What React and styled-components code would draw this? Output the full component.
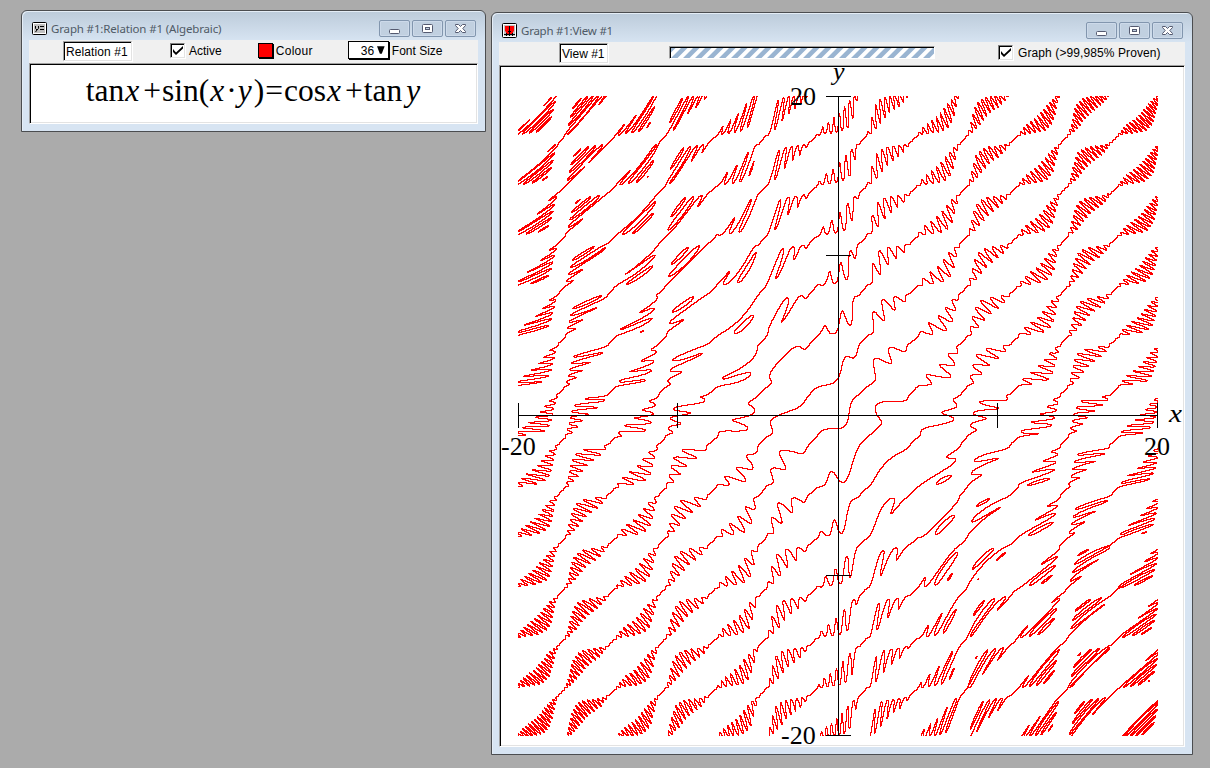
import React, { useMemo } from "react";
import styled, { createGlobalStyle } from "styled-components";

const Global = createGlobalStyle`
  html, body { margin: 0; background: #ababab; overflow: hidden; }
  #root { height: 768px; }
`;

const Desktop = styled.main`
  position: relative;
  width: 1210px;
  height: 768px;
  background: #ababab;
`;

const Window = styled.section`
  position: absolute;
  left: ${(p) => p.$x}px;
  top: ${(p) => p.$y}px;
  width: ${(p) => p.$w}px;
  height: ${(p) => p.$h}px;
  box-sizing: border-box;
  border: 1px solid #4b4d50;
  border-radius: 6px 6px 0 0;
  padding: 0 7px 7px;
  display: flex;
  flex-direction: column;
  background: linear-gradient(#bccbda 0, #d7e4f2 30px);
  box-shadow: inset 1px 1px 0 #e4edf6;
`;

const TitleBar = styled.header`
  display: flex;
  height: 29px;
  flex: none;
  padding: 0 2px 0 3px;
`;

const TitleIcon = styled.svg`
  width: 15px;
  height: ${(p) => p.$h}px;
  margin-top: ${(p) => p.$top}px;
  flex: none;
`;

const Title = styled.h1`
  margin: 10px 0 0 4px;
  flex: 1;
  font: 400 11.5px/16px "Noto Sans", sans-serif;
  letter-spacing: ${(p) => p.$track}px;
  color: #4f5a66;
  white-space: nowrap;
`;

const Captions = styled.div`
  display: flex;
  gap: 2px;
  margin-top: 9px;
`;

const CaptionButton = styled.button`
  width: 31px;
  height: 17px;
  padding: 0;
  border: 1px solid #8296ae;
  border-radius: 2px;
  background: #c1d0e0;
  box-shadow: inset 0 0 0 1px #cddaea;
  svg { display: block; margin: auto; }
`;

const Toolbar = styled.div`
  display: flex;
  height: ${(p) => p.$h}px;
  flex: none;
  background: #f0f0f0;
  font: 12px/14px "Liberation Sans", Arial, sans-serif;
  color: #000;
  white-space: nowrap;
`;

const NameField = styled.div`
  box-sizing: border-box;
  width: ${(p) => p.$w}px;
  height: 20px;
  margin: 1px 0 0 ${(p) => p.$ml}px;
  padding: 3px 0 0 2px;
  background: #fff;
  border: 1px solid;
  border-color: #a0a0a0 #e3e3e3 #e3e3e3 #a0a0a0;
  box-shadow: inset 1px 1px 0 #000, 1px 1px 0 #fff;
  letter-spacing: ${(p) => p.$track || 0}px;
`;

const CheckBox = styled.div`
  box-sizing: border-box;
  width: 15px;
  height: 15px;
  margin: 3px 4px 0 ${(p) => p.$ml}px;
  background: #fff;
  border: 1px solid;
  border-color: #808080 #e3e3e3 #e3e3e3 #808080;
  box-shadow: inset 1px 1px 0 #000, 1px 1px 0 #fff;
  svg { display: block; }
`;

const Label = styled.span`
  margin: 4px 0 0 ${(p) => p.$ml || 0}px;
  letter-spacing: ${(p) => p.$track || 0}px;
`;

const Swatch = styled.div`
  box-sizing: border-box;
  width: 15px;
  height: 15px;
  margin: 3px 3px 0 36px;
  background: #f00;
  border: 1px solid #000;
  box-shadow: 1px 1px 0 #000;
`;

const SizeSelect = styled.div`
  box-sizing: border-box;
  display: flex;
  width: 41px;
  height: 18px;
  margin: 1px 0 0 35px;
  padding: 2px 3px 0 12px;
  gap: 3px;
  border: 1px solid #000;
  box-shadow: 1px 1px 0 #000;
  background: #fff;
`;

const Progress = styled.div`
  box-sizing: border-box;
  width: 266px;
  height: 13px;
  margin: 4px 0 0 61px;
  border: 1px solid;
  border-color: #a0a0a0 #fff #fff #a0a0a0;
  box-shadow: inset 1px 1px 0 #000;
  svg { display: block; margin: 1px 0 0 1px; }
`;

const Sheet = styled.div`
  flex: 1;
  display: flex;
  justify-content: center;
  background: #fff;
  border: 1px solid;
  border-color: #a0a0a0 #fff #fff #a0a0a0;
  box-shadow: inset 1px 1px 0 #000, inset -1px -1px 0 #e3e3e3;
`;

const Formula = styled.div`
  margin: 10px 0 0 0;
  font: 31.5px/34px "Liberation Serif", "Times New Roman", serif;
  color: #000;
  white-space: nowrap;
`;

const Variable = styled.i`
  margin: 0 ${(p) => p.$after}px 0 ${(p) => p.$before}px;
`;

const Operator = styled.span`
  margin: 0 1px;
`;

const Plot = styled.svg`
  display: block;
  width: 682px;
  height: 679px;
  flex: none;
  overflow: visible;
  text { font-family: "Liberation Serif", "Times New Roman", serif; font-size: 26px; fill: #000; }
`;

const MinGlyph = () => (
  <svg width="13" height="13" viewBox="0 0 13 13"><rect x="1.5" y="7.5" width="10" height="4" rx="1" fill="#fff" stroke="#555a70" /></svg>
);
const MaxGlyph = () => (
  <svg width="13" height="13" viewBox="0 0 13 13">
    <rect x="1.5" y="2.5" width="10" height="8" rx="1" fill="#fff" stroke="#555a70" />
    <rect x="4.5" y="5.5" width="4" height="2" fill="#c1d0e0" stroke="#555a70" />
  </svg>
);
const CloseGlyph = () => (
  <svg width="13" height="13" viewBox="0 0 13 13">
    <path d="M1.5 2.5H4.5L6.5 4.5L8.5 2.5H11.5V3.5L8.8 6.5L11.5 9.5V10.5H8.5L6.5 8.5L4.5 10.5H1.5V9.5L4.2 6.5L1.5 3.5Z" fill="#fff" stroke="#555a70" />
  </svg>
);
const Check = () => (
  <svg width="13" height="13" viewBox="0 0 13 13"><path d="M2 5V8L5 11L12 4.500V2L5 8.500Z" fill="#000" /></svg>
);

const WindowButtons = () => (
  <Captions>
    <CaptionButton aria-label="Minimize"><MinGlyph /></CaptionButton>
    <CaptionButton aria-label="Maximize"><MaxGlyph /></CaptionButton>
    <CaptionButton aria-label="Close"><CloseGlyph /></CaptionButton>
  </Captions>
);

const SIZE = 640;
const SUB = 3;

// tan x + sin(xy) = cos x + tan y, multiplied by cos x cos y so it has no poles
function relationPath() {
  const n = SIZE * SUB;
  const step = 40 / n;
  const cosX = new Float64Array(n + 1);
  const sinX = new Float64Array(n + 1);
  for (let i = 0; i <= n; i++) {
    const x = -20 + i * step;
    cosX[i] = Math.cos(x);
    sinX[i] = Math.sin(x);
  }
  const hit = new Uint8Array(SIZE * SIZE);
  let prev = new Uint8Array(n + 1);
  let cur = new Uint8Array(n + 1);
  for (let j = 0; j <= n; j++) {
    const y = 20 - j * step;
    const cy = Math.cos(y);
    const sy = Math.sin(y);
    for (let i = 0; i <= n; i++) {
      const x = -20 + i * step;
      const f = sinX[i] * cy + (Math.sin(x * y) - cosX[i]) * cosX[i] * cy - sy * cosX[i];
      cur[i] = f > 0 ? 1 : 0;
    }
    if (j > 0) {
      const row = Math.floor((j - 1) / SUB) * SIZE;
      for (let i = 1; i <= n; i++) {
        const s = cur[i] + cur[i - 1] + prev[i] + prev[i - 1];
        if (s > 0 && s < 4) hit[row + Math.floor((i - 1) / SUB)] = 1;
      }
    }
    [prev, cur] = [cur, prev];
  }
  const parts = [];
  for (let r = 0; r < SIZE; r++) {
    let c = 0;
    while (c < SIZE) {
      if (!hit[r * SIZE + c]) { c++; continue; }
      const start = c;
      while (c < SIZE && hit[r * SIZE + c]) c++;
      parts.push(`M${start} ${r}h${c - start}v1h${start - c}z`);
    }
  }
  return parts.join("");
}

function Graph() {
  const d = useMemo(relationPath, []);
  return (
    <Plot viewBox="501 66 682 679">
      <path transform="translate(518 96)" d={d} fill="#f00" shapeRendering="crispEdges" />
      <g fill="#000" shapeRendering="crispEdges">
        <rect x="518" y="415" width="640" height="1" />
        <rect x="838" y="96" width="1" height="640" />
        {[518, 677, 997, 1157].map((x) => <rect key={x} x={x} y="403" width="1" height="25" />)}
        {[96, 255, 575, 735].map((y) => <rect key={y} x="826" y={y} width="25" height="1" />)}
      </g>
      <text x="790" y="105">20</text>
      <text x="781" y="744">-20</text>
      <text x="501" y="455">-20</text>
      <text x="1144" y="455">20</text>
      <g fontStyle="italic">
        <text x="833" y="80">y</text>
        <text x="1169" y="422" textLength="13" lengthAdjust="spacingAndGlyphs">x</text>
      </g>
    </Plot>
  );
}

export default function App() {
  return (
    <Desktop>
      <Global />
      <Window $x={21} $y={10} $w={465} $h={122}>
        <TitleBar>
          <TitleIcon viewBox="0 0 15 13" $h={13} $top={11}>
            <rect x="0.5" y="0.5" width="14" height="12" rx="1" fill="#fff" stroke="#000" />
            <rect x="2" y="2" width="11" height="9" fill="#c0c0c0" />
            <path d="M3.5 4V6.5L5 8L6.500 6.500V4M5 8L3.500 10M8 4.500H12M8 7.500H12" fill="none" stroke="#000" />
          </TitleIcon>
          <Title $track={-0.15}>Graph #1:Relation #1 (Algebraic)</Title>
          <WindowButtons />
        </TitleBar>
        <Toolbar $h={23}>
          <NameField $w={69} $ml={34} $track={0.1}>Relation #1</NameField>
          <CheckBox $ml={38}><Check /></CheckBox>
          <Label>Active</Label>
          <Swatch />
          <Label $track={0.3}>Colour</Label>
          <SizeSelect>
            <span>36</span>
            <svg width="8" height="10" viewBox="0 0 8 10"><path d="M0 2H8L5 10H3Z" /></svg>
          </SizeSelect>
          <Label $ml={3}>Font Size</Label>
        </Toolbar>
        <Sheet>
          <Formula>
            tan<Variable $before={1} $after={3}>x</Variable><Operator>+</Operator>sin(<Variable $before={1} $after={2}>x</Variable>·<Variable $before={1} $after={2}>y</Variable>)<Operator>=</Operator>cos<Variable $before={1} $after={3}>x</Variable><Operator>+</Operator>tan<Variable $before={4} $after={1}>y</Variable>
          </Formula>
        </Sheet>
      </Window>
      <Window $x={491} $y={12} $w={702} $h={743}>
        <TitleBar>
          <TitleIcon viewBox="0 0 15 15" $h={15} $top={10}>
            <rect x="0.5" y="0.5" width="14" height="14" rx="1" fill="#fff" stroke="#000" />
            <rect x="2" y="2" width="11" height="11" fill="#c0c0c0" />
            <path d="M3 3H12V8L11 9V12H4V9L3 8Z" fill="#f00" />
            <path d="M7.500 3V13M2 11.500H13M4.500 10V13M10.500 10V13M6 8.500H9" stroke="#000" />
          </TitleIcon>
          <Title $track={-0.24}>Graph #1:View #1</Title>
          <WindowButtons />
        </TitleBar>
        <Toolbar $h={23}>
          <NameField $w={49} $ml={60}>View #1</NameField>
          <Progress>
            <svg width="263" height="10">
              <defs>
                <pattern id="stripes" width="12" height="10" patternUnits="userSpaceOnUse">
                  <rect width="12" height="10" fill="#fff" />
                  <path d="M0 10L10 0H16.500L6.500 10ZM-12 10L-2 0H4.500L-5.500 10Z" fill="#99b4d1" />
                </pattern>
              </defs>
              <rect width="263" height="10" fill="url(#stripes)" />
            </svg>
          </Progress>
          <CheckBox $ml={63}><Check /></CheckBox>
          <Label $ml={1} $track={0.1}>Graph (&gt;99,985% Proven)</Label>
        </Toolbar>
        <Sheet><Graph /></Sheet>
      </Window>
    </Desktop>
  );
}
